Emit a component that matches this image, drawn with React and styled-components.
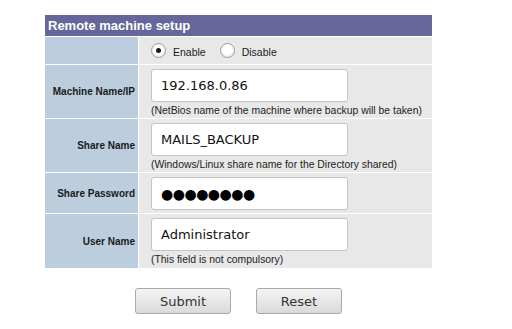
import React from 'react'
import styled, { createGlobalStyle } from 'styled-components'

const Global = createGlobalStyle`
  body {
    margin: 0;
    background: #ffffff;
    font-family: "Liberation Sans", Arial, sans-serif;
  }
`

const Page = styled.div`
  padding: 15px 0 0 45px;
  width: 387px;
`

const Grid = styled.div`
  display: grid;
  grid-template-columns: 93px 1fr;
  gap: 1px;
  width: 387px;
`

const Header = styled.div`
  grid-column: 1 / span 2;
  height: 21px;
  background: #66669a;
  color: #ffffff;
  font-weight: bold;
  font-size: 13px;
  line-height: 21px;
  padding-left: 3px;
`

const Label = styled.div`
  background: #bccddd;
  height: ${p => p.h}px;
  display: flex;
  align-items: center;
  justify-content: flex-end;
  padding-right: 3px;
  font-size: 10px;
  font-weight: bold;
  color: #1a1a1a;
`

const Cell = styled.div`
  background: #e8e8e8;
  height: ${p => p.h}px;
  box-sizing: border-box;
  padding: 4px 0 0 12px;
  display: flex;
  flex-direction: column;
  align-items: flex-start;
`

const RadioCell = styled(Cell)`
  flex-direction: row;
  align-items: center;
  padding-top: 0;
`

const RadioLabel = styled.label`
  display: flex;
  align-items: center;
  font-size: 10.5px;
  color: #222;
  margin-right: 14px;
  padding-top: 2px;
`

const Radio = styled.input`
  appearance: none;
  -webkit-appearance: none;
  width: 15px;
  height: 15px;
  margin: -3px 7px 0 0;
  border-radius: 50%;
  border: 1px solid #9c9c9c;
  background: radial-gradient(circle at 50% 40%, #ffffff 40%, #e4e4e4 100%);
  box-sizing: border-box;
  position: relative;
  &:checked::after {
    content: "";
    position: absolute;
    left: 4px;
    top: 4px;
    width: 5px;
    height: 5px;
    border-radius: 50%;
    background: #1a1a1a;
  }
`

const Field = styled.input`
  width: 197px;
  height: 33px;
  box-sizing: border-box;
  border: 1px solid #c4c4c4;
  border-radius: 3px;
  background: #ffffff;
  padding: 0 9px;
  font-family: "DejaVu Sans", sans-serif;
  font-size: 13px;
  color: #111;
  outline: none;
`

const Secret = styled(Field)`
  font-size: 14px;
  letter-spacing: -0.5px;
  color: #000;
`

const Hint = styled.div`
  font-size: 10.4px;
  color: #222;
  margin-top: 3px;
`

const Buttons = styled.div`
  display: flex;
  justify-content: center;
  gap: 25px;
  margin-top: 20px;
`

const Button = styled.button`
  width: ${p => p.w}px;
  height: 26px;
  border: 1px solid #a9a9a9;
  border-radius: 3px;
  background: linear-gradient(#f4f4f4, #dadada);
  font-family: "DejaVu Sans", sans-serif;
  font-size: 13px;
  color: #333;
  padding: 0;
`

export default function App() {
  return (
    <Page>
      <Global />
      <Grid>
        <Header>Remote machine setup</Header>

        <Label h={27} />
        <RadioCell h={27}>
          <RadioLabel>
            <Radio type="radio" name="mode" defaultChecked />
            Enable
          </RadioLabel>
          <RadioLabel>
            <Radio type="radio" name="mode" />
            Disable
          </RadioLabel>
        </RadioCell>

        <Label h={53}>Machine Name/IP</Label>
        <Cell h={53}>
          <Field defaultValue="192.168.0.86" />
          <Hint>(NetBios name of the machine where backup will be taken)</Hint>
        </Cell>

        <Label h={53}>Share Name</Label>
        <Cell h={53}>
          <Field defaultValue="MAILS_BACKUP" />
          <Hint>(Windows/Linux share name for the Directory shared)</Hint>
        </Cell>

        <Label h={40}>Share Password</Label>
        <Cell h={40}>
          <Secret defaultValue={'\u25CF'.repeat(8)} readOnly />
        </Cell>

        <Label h={54}>User Name</Label>
        <Cell h={54}>
          <Field defaultValue="Administrator" />
          <Hint>(This field is not compulsory)</Hint>
        </Cell>
      </Grid>
      <Buttons>
        <Button w={96}>Submit</Button>
        <Button w={86}>Reset</Button>
      </Buttons>
    </Page>
  )
}
